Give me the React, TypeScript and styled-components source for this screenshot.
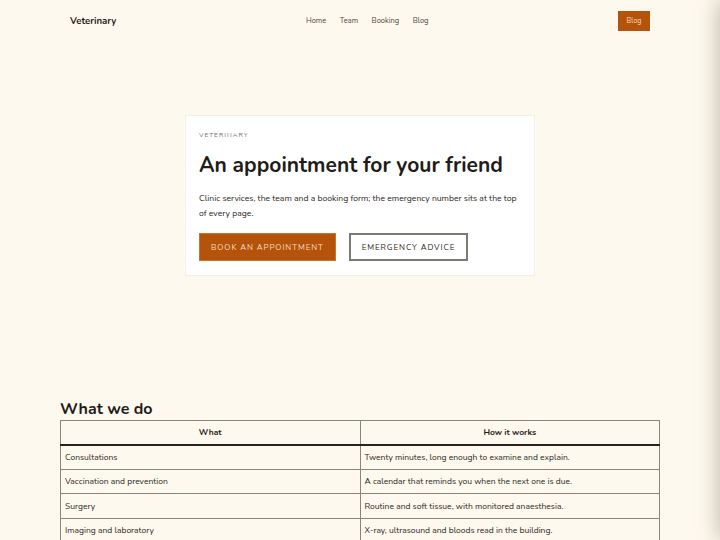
import styled, { createGlobalStyle } from "styled-components";

const GlobalStyle = createGlobalStyle`
  * { box-sizing: border-box; }
  html, body {
    margin: 0;
    padding: 0;
    background: #fef9ee;
    color: #2a2622;
    font-family: "Nunito", "Noto Sans", sans-serif;
  }
`;

const services = [
  ["Consultations", "Twenty minutes, long enough to examine and explain."],
  ["Vaccination and prevention", "A calendar that reminds you when the next one is due."],
  ["Surgery", "Routine and soft tissue, with monitored anaesthesia."],
  ["Imaging and laboratory", "X-ray, ultrasound and bloods read in the building."],
];

export default function App() {
  return (
    <Page>
      <GlobalStyle />
      <Header>
        <Logo>Veterinary</Logo>
        <Nav>
          <NavLink href="#">Home</NavLink>
          <NavLink href="#">Team</NavLink>
          <NavLink href="#">Booking</NavLink>
          <NavLink href="#">Blog</NavLink>
        </Nav>
        <HeaderButton href="#">Blog</HeaderButton>
      </Header>

      <Hero>
        <HeroCard>
          <Eyebrow>Veterinary</Eyebrow>
          <Title>An appointment for your friend</Title>
          <Lead>
            Clinic services, the team and a booking form; the emergency number sits at the top
            of every page.
          </Lead>
          <Actions>
            <Button $primary>Book an appointment</Button>
            <Button>Emergency advice</Button>
          </Actions>
        </HeroCard>
      </Hero>

      <Section>
        <SectionTitle>What we do</SectionTitle>
        <Table>
          <thead>
            <tr>
              <Th>What</Th>
              <Th>How it works</Th>
            </tr>
          </thead>
          <tbody>
            {services.map(([what, how]) => (
              <tr key={what}>
                <Td>{what}</Td>
                <Td>{how}</Td>
              </tr>
            ))}
          </tbody>
        </Table>
      </Section>

      {/* drawer parked just off screen, only its shadow shows */}
      <Drawer />
    </Page>
  );
}

const Page = styled.div`
  width: 600px;
  margin: 0 auto;
`;

const Header = styled.header`
  display: flex;
  align-items: center;
  justify-content: space-between;
  height: 41px;
  padding: 0 10px;
`;

const Logo = styled.div`
  font-size: 9.6px;
  font-weight: 700;
  color: #1f1c19;
`;

const Nav = styled.nav`
  display: flex;
  gap: 13.5px;
`;

const NavLink = styled.a`
  font-size: 7.5px;
  color: #4d4843;
  text-decoration: none;

  &:visited {
    color: #4d4843;
  }
`;

const HeaderButton = styled.a`
  display: inline-flex;
  align-items: center;
  justify-content: center;
  width: 32px;
  height: 20px;
  background: #b45309;
  color: #f6dcc0;
  font-size: 7px;
  text-decoration: none;
`;

const Hero = styled.section`
  display: flex;
  justify-content: center;
  padding: 74px 0 0;
  height: 359px;
`;

const HeroCard = styled.div`
  width: 350px;
  height: 161px;
  background: #ffffff;
  border: 1px solid #f4efe4;
  padding: 14px 13px;
`;

const Eyebrow = styled.div`
  font-size: 6.5px;
  letter-spacing: 1px;
  text-transform: uppercase;
  color: #77716a;
`;

const Title = styled.h1`
  margin: 12px 0 0;
  font-size: 21px;
  font-weight: 700;
  line-height: 28px;
  color: #1f1c19;
`;

const Lead = styled.p`
  margin: 12px 0 0;
  font-size: 8.6px;
  line-height: 15px;
  color: #2a2622;
`;

const Actions = styled.div`
  display: flex;
  gap: 13px;
  margin-top: 12px;
`;

const Button = styled.button<{ $primary?: boolean }>`
  height: 28px;
  padding: 0 11px;
  font-family: inherit;
  font-size: 8px;
  letter-spacing: 0.9px;
  text-transform: uppercase;
  cursor: pointer;
  background: ${(p) => (p.$primary ? "#b45309" : "#ffffff")};
  color: ${(p) => (p.$primary ? "#f6dcc0" : "#2a2622")};
  border: ${(p) => (p.$primary ? "1px solid #c9742e" : "2px solid #7d7a74")};
`;

const Section = styled.section``;

const SectionTitle = styled.h2`
  margin: 0 0 2px;
  font-size: 16px;
  font-weight: 700;
  line-height: 18px;
  color: #1f1c19;
`;

const Table = styled.table`
  width: 100%;
  border-collapse: collapse;
  table-layout: fixed;
`;

const Th = styled.th`
  height: 24px;
  font-size: 8.5px;
  font-weight: 700;
  text-align: center;
  border: 1px solid #8a857c;
  border-bottom: 2px solid #27231f;
  color: #1f1c19;
`;

const Td = styled.td`
  height: 24.5px;
  padding: 0 4px;
  font-size: 8.5px;
  border: 1px solid #8a857c;
  color: #2a2622;
`;

const Drawer = styled.div`
  position: fixed;
  top: 0;
  left: 100%;
  width: 240px;
  height: 100vh;
  background: #fef9ee;
  box-shadow: 0 0 22px rgba(60, 50, 30, 0.35);
`;
